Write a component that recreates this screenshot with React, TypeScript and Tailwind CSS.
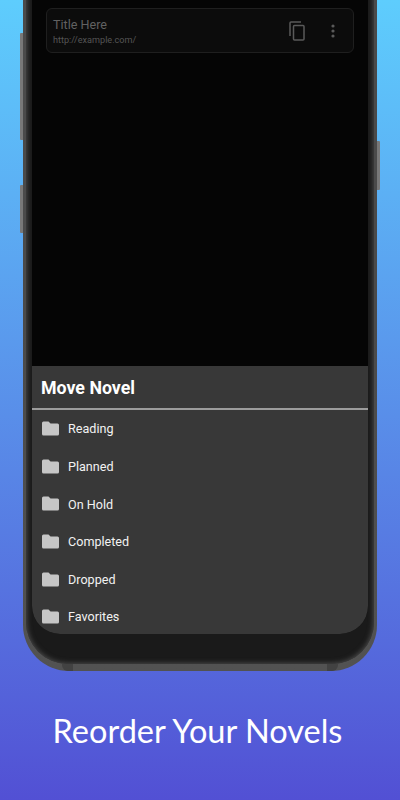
import React from 'react';

const folders = ['Reading', 'Planned', 'On Hold', 'Completed', 'Dropped', 'Favorites'];

export default function App() {
    return (
        <div className="w-[400px] h-[800px] overflow-hidden flex flex-col items-center bg-gradient-to-b from-[#5ecdfd] to-[#5250d4] font-['Roboto',sans-serif]">
            {/* Phone body, top runs off the page */}
            <div className="relative mt-[-20px] w-[354px] h-[691px] shrink-0 rounded-b-[46px] bg-gradient-to-b from-[#4a4a4a] via-[#4a4a4a] to-[#525252] px-[3px] pb-[7px]">
                <div className="absolute left-[-3px] top-[53px] w-[3px] h-[107px] bg-[#787878] rounded-l-[1px]"></div>
                <div className="absolute left-[-3px] top-[205px] w-[3px] h-[48px] bg-[#787878] rounded-l-[1px]"></div>
                <div className="absolute right-[-3px] top-[161px] w-[3px] h-[49px] bg-[#787878] rounded-r-[1px]"></div>
                {/* Antenna breaks in the frame */}
                <div className="absolute bottom-0 left-[39px] w-[11px] h-[7px] rounded-bl-[6px] bg-[#424242]"></div>
                <div className="absolute bottom-0 left-[304px] w-[11px] h-[7px] rounded-br-[6px] bg-[#424242]"></div>

                <div className="h-full rounded-b-[42px] bg-[#1a1a1a] px-[6px] shadow-[inset_0_0_5px_1px_#4a4a4a]">
                    {/* Screen */}
                    <div className="h-[654px] rounded-b-[28px] overflow-hidden bg-[#050505] flex flex-col">
                        <div className="flex-1 px-[14px] pt-[28px]">
                            <div className="h-[45px] rounded-[6px] border border-[#1f1f1f] bg-[#0c0c0c] flex items-center pl-[6px]">
                                <div className="flex-1 min-w-0 pt-[1px]">
                                    <div className="text-[12.6px] leading-[18px] text-[#616161]">Title Here</div>
                                    <div className="text-[9.1px] leading-[13px] text-[#555555]">http://example.com/</div>
                                </div>
                                <svg className="w-[16px] h-[20px] mr-[26px] text-[#5a5a5a]" viewBox="0 0 16 20" fill="none" stroke="currentColor" strokeWidth="1.5">
                                    <path d="M12 1 H2 Q1 1 1 2 V15" />
                                    <rect x="4.5" y="4.5" width="10.5" height="14.5" rx="1" />
                                </svg>
                                <svg className="w-[4px] h-[14px] mr-[18px] text-[#5a5a5a]" viewBox="0 0 4 14" fill="currentColor">
                                    <circle cx="2" cy="2" r="1.6" />
                                    <circle cx="2" cy="7" r="1.6" />
                                    <circle cx="2" cy="12" r="1.6" />
                                </svg>
                            </div>
                        </div>

                        {/* Move sheet */}
                        <div className="h-[268px] bg-[#383838] shrink-0">
                            <div className="h-[44px] flex items-center pl-[9px] pt-[3px] border-b-2 border-[#9c9c9c] text-[17.8px] font-bold text-white">Move Novel</div>
                            <div className="pt-[1px]">
                                {folders.map((name) => (
                                    <div key={name} className="h-[37.6px] flex items-center pl-[10px] gap-[9px]">
                                        <svg className="w-[17px] h-[15px] mb-[2px]" viewBox="0 0 17 15" fill="#c6c6c6">
                                            <path d="M1.5 0.5 L6.5 0.5 L8.5 2.5 L15.5 2.5 Q17 2.5 17 4 L17 13 Q17 14.5 15.5 14.5 L1.5 14.5 Q0 14.5 0 13 L0 2 Q0 0.5 1.5 0.5 Z" />
                                        </svg>
                                        <span className="text-[12.6px] text-[#f2f2f2]">{name}</span>
                                    </div>
                                ))}
                            </div>
                        </div>
                    </div>
                </div>
            </div>

            <div className="flex-1 flex items-center justify-center pb-[8px] pr-[5px] text-[32.5px] text-white font-['Lato',sans-serif]">Reorder Your Novels</div>
        </div>
    );
}
